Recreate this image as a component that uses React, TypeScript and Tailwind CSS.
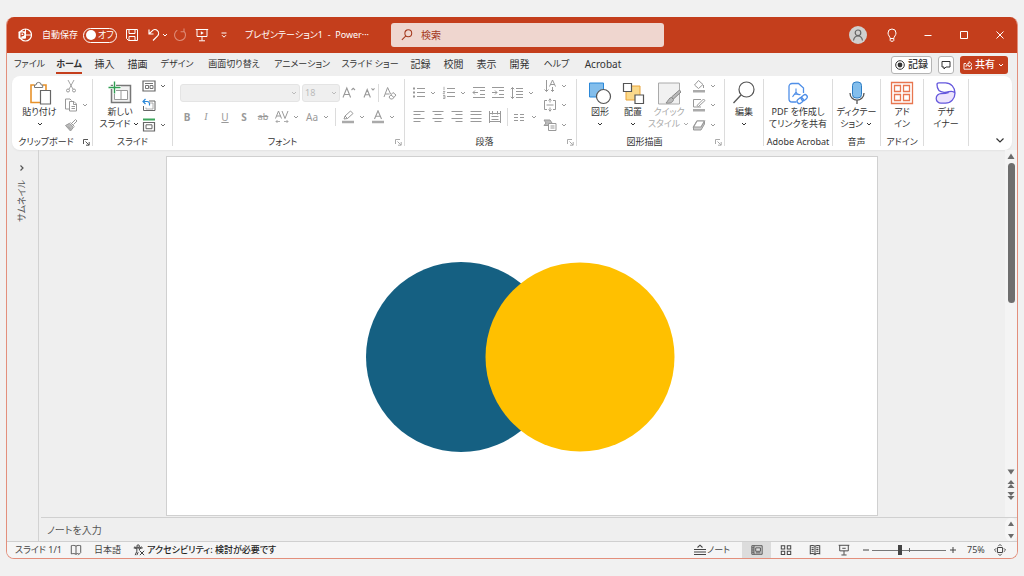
import type { ReactNode } from 'react';

type IconProps = { children: ReactNode; className?: string; box?: string };

function Icon({ children, className = 'size-3.5', box = '0 0 14 14' }: IconProps) {
  return (
    <svg className={`shrink-0 ${className}`} viewBox={box} fill="none" stroke="currentColor" aria-hidden="true">
      {children}
    </svg>
  );
}

function Caret({ className = 'size-2' }: { className?: string }) {
  return (
    <Icon className={className} box="0 0 8 8">
      <path d="M2 3l2 2 2-2" strokeWidth="1" />
    </Icon>
  );
}

// Small ribbon command, optionally with a drop-down arrow
function Tool({ label, caret, children }: { label: string; caret?: boolean; children: ReactNode }) {
  return (
    <button type="button" aria-label={label} className="flex items-center gap-[3px]">
      <span className="flex w-3.5 justify-center whitespace-nowrap">{children}</span>
      {caret && <Caret />}
    </button>
  );
}

// Large ribbon command: icon over one or two lines of text
function BigButton({ icon, lines, caret, className = '' }: { icon: ReactNode; lines: string[]; caret?: 'below' | 'inline'; className?: string }) {
  return (
    <button type="button" className={`flex flex-col items-center pt-1 text-[9px] leading-3 whitespace-nowrap ${className}`}>
      <span className="flex h-[26px] items-center justify-center">{icon}</span>
      {lines.map((line, i) => (
        <span key={line} className="flex items-center gap-0.5">
          {line}
          {caret === 'inline' && i === lines.length - 1 && <Caret />}
        </span>
      ))}
      {caret === 'below' && <Caret className="mt-0.5 size-2" />}
    </button>
  );
}

function Group({ label, className, launcher, muted, children }: { label?: string; className: string; launcher?: boolean; muted?: boolean; children: ReactNode }) {
  return (
    <section className={`flex shrink-0 ${className}`}>
      <div className="flex min-w-0 flex-1 flex-col">
        <div className="flex h-[59px] justify-center">{children}</div>
        <div className="flex h-3.5 items-center text-[9px] leading-3 whitespace-nowrap">
          <span className="flex flex-1 justify-center">{label}</span>
          {launcher && (
            <button type="button" aria-label={`${label}の詳細`} className={`flex w-3 justify-center ${muted ? 'text-[#aaa]' : 'text-[#555]'}`}>
              <Icon className="size-[7px]" box="0 0 7 7">
                <path d="M.5 5V.5H5M2.5 2.5l3.5 3.5M6.2 3v3.2H3" strokeWidth="1" />
              </Icon>
            </button>
          )}
        </div>
      </div>
      <div className="mt-[3px] mb-1 w-px bg-[#dcdcdc]" />
    </section>
  );
}

const tabs = [
  { name: 'ファイル', style: 'w-[41px] text-[9px]' },
  { name: 'ホーム', style: 'w-[38px] text-[9px]', active: true },
  { name: '挿入', style: 'w-[33px] text-[10px]' },
  { name: '描画', style: 'w-[33px] text-[10px]' },
  { name: 'デザイン', style: 'w-[46px] text-[9px]' },
  { name: '画面切り替え', style: 'w-[68px] text-[9px]' },
  { name: 'アニメーション', style: 'w-[68px] text-[9px]' },
  { name: 'スライド ショー', style: 'w-[68px] text-[9px]' },
  { name: '記録', style: 'w-[33px] text-[10px]' },
  { name: '校閲', style: 'w-[33px] text-[10px]' },
  { name: '表示', style: 'w-[33px] text-[10px]' },
  { name: '開発', style: 'w-[33px] text-[10px]' },
  { name: 'ヘルプ', style: 'w-[41px] text-[9px]' },
  { name: 'Acrobat', style: 'w-[52px] text-[10px]' },
];

function TitleBar() {
  return (
    <header className="flex h-9 items-center bg-[#c43e1c] text-[9px] text-white">
      <div className="flex min-w-0 flex-1 items-center pl-[11px]">
        <Icon>
          <circle cx="7.500" cy="7" r="6" strokeWidth="1.200" />
          <path d="M7.500 1v6h6" strokeWidth="1" />
          <rect x="0.500" y="3.200" width="7.500" height="7.600" rx="1" fill="#fff" stroke="none" />
          <path d="M3 9.500V5h1.600a1.300 1.300 0 010 2.600H3" stroke="#c43e1c" strokeWidth="1.100" />
        </Icon>
        <label htmlFor="autosave" className="ml-2.5 w-[41px] whitespace-nowrap">自動保存</label>
        <span className="relative flex h-[15px] w-[34px] items-center gap-0.5 rounded-full border border-white pl-0.5 whitespace-nowrap">
          <input id="autosave" type="checkbox" className="absolute inset-0 appearance-none rounded-full" />
          <span className="size-2.5 shrink-0 rounded-full bg-white" />
          <span>オフ</span>
        </span>
        <button type="button" aria-label="保存" className="ml-2">
          <Icon>
            <path d="M1.500 1.500h11v11h-9l-2-2zM4 1.500v4h6v-4M4 12.500v-4h6v4" />
          </Icon>
        </button>
        <button type="button" aria-label="元に戻す" className="ml-2 flex items-center">
          <Icon>
            <path d="M2 1.500v4.500h4.500M2.200 5.800l3-3a3.600 3.600 0 015.400 5L6 12.500" strokeWidth="1.200" />
          </Icon>
          <Caret />
        </button>
        <button type="button" aria-label="やり直し" className="ml-1 text-[#dd8b77]">
          <Icon>
            <path d="M4.300 2.200a5.500 5.500 0 106.600.9M11 .5v3.300H7.600" strokeWidth="1.100" />
          </Icon>
        </button>
        <button type="button" aria-label="スライドショーの開始" className="ml-2">
          <Icon>
            <path d="M.8 1.500h12.400M2 1.500v7h10v-7M7 8.500v4M4 12.800h6" />
            <path d="M5.800 3.200v3.600l3-1.800z" fill="currentColor" stroke="none" />
          </Icon>
        </button>
        <button type="button" aria-label="クイック アクセスのカスタマイズ" className="ml-2.5">
          <Icon className="size-2.5" box="0 0 10 10">
            <path d="M2.500 3h5M3 5.200l2 2 2-2" />
          </Icon>
        </button>
        <h1 className="ml-4 whitespace-nowrap">プレゼンテーション1 &nbsp;-&nbsp; Power···</h1>
      </div>
      <div className="flex h-6 w-[273px] shrink-0 items-center gap-2 rounded-[3px] bg-[#efd6cf] px-2.5 text-[#a4391e]">
        <Icon className="size-3">
          <circle cx="8.500" cy="5" r="4" strokeWidth="1.200" />
          <path d="M5.700 7.900L1 12.800" strokeWidth="1.200" />
        </Icon>
        <input type="search" aria-label="検索" placeholder="検索" className="min-w-0 flex-1 bg-transparent text-[10px] outline-none placeholder:text-[#a4391e] placeholder:opacity-100" />
      </div>
      <div className="flex w-[353px] shrink-0 items-center justify-end pr-2.5">
        <button type="button" aria-label="アカウント" className="mr-[18px] rounded-full bg-[#d0cfce] text-[#666]">
          <Icon className="size-[18px]" box="0 0 18 18">
            <circle cx="9" cy="6.800" r="2.800" strokeWidth="1.200" />
            <path d="M4.500 14.500c.5-3 2-4.500 4.500-4.500s4 1.500 4.500 4.500" strokeWidth="1.200" />
          </Icon>
        </button>
        <button type="button" aria-label="ヒント" className="mr-[22px]">
          <Icon>
            <path d="M5.200 10.500c0-1.800-2.200-3-2.200-5.500a4 4 0 018 0c0 2.500-2.200 3.700-2.200 5.500zM5.200 10.500v2l.6.700h2.400l.6-.7v-2" />
          </Icon>
        </button>
        <button type="button" aria-label="最小化" className="mr-[22px]">
          <Icon><path d="M3.500 7.500h7" /></Icon>
        </button>
        <button type="button" aria-label="最大化" className="mr-[22px]">
          <Icon><path d="M3.500 3.500h7v7h-7z" /></Icon>
        </button>
        <button type="button" aria-label="閉じる">
          <Icon><path d="M3.500 3.500l7 7M10.500 3.500l-7 7" /></Icon>
        </button>
      </div>
    </header>
  );
}

function TabRow() {
  return (
    <div className="flex h-[23px] items-center justify-between">
      <nav className="flex pl-0.5" role="tablist">
        {tabs.map((tab) => (
          <button
            key={tab.name}
            type="button"
            role="tab"
            aria-selected={!!tab.active}
            className={`flex justify-center leading-4 whitespace-nowrap ${tab.style}`}
          >
            <span className={tab.active ? 'border-b-2 border-[#c43e1c] font-bold' : 'border-b-2 border-transparent'}>{tab.name}</span>
          </button>
        ))}
      </nav>
      <div className="flex items-center gap-1.5 pr-[9px] text-[10px]">
        <button type="button" className="flex h-[18px] items-center gap-[3px] rounded-[3px] border border-[#b5b5b5] bg-white px-[3px] font-medium">
          <Icon className="size-2.5" box="0 0 10 10">
            <circle cx="5" cy="5" r="4.300" />
            <circle cx="5" cy="5" r="2.400" fill="currentColor" stroke="none" />
          </Icon>
          記録
        </button>
        <button type="button" aria-label="コメント" className="flex h-[18px] w-4 items-center justify-center rounded-[3px] border border-[#b5b5b5] bg-white">
          <Icon className="size-2.5" box="0 0 10 10">
            <path d="M1 1.500h8v5.500H5L3 9V7H1z" />
          </Icon>
        </button>
        <button type="button" className="flex h-[18px] items-center gap-0.5 rounded-[3px] bg-[#c43e1c] px-[3px] font-medium text-white">
          <Icon className="size-2.5" box="0 0 10 10">
            <path d="M3 3.500H1v5.700h7.500V6.500M3 6.500c.2-2 1.300-3 3-3V1.500l3 2.800-3 2.700V5.200c-1.400 0-2.200.3-3 1.300z" strokeWidth=".9" />
          </Icon>
          共有
          <Caret />
        </button>
      </div>
    </div>
  );
}

function ClipboardGroup() {
  return (
    <Group label="クリップボード" className="w-[81px]" launcher>
      <BigButton
        className="w-12"
        caret="below"
        lines={['貼り付け']}
        icon={
          <Icon className="size-6" box="0 0 24 24">
            <path d="M6.500 4H3v17.500h9M14.500 4h3.500v5" stroke="#e8922a" strokeWidth="1.600" />
            <path d="M6.500 6.500V4H8a2.600 2.600 0 015.200 0h1.500v2.500z" stroke="#777" fill="#fff" />
            <path d="M12.500 9.500h10v13.500h-10z" stroke="#666" fill="#fff" strokeWidth="1.200" />
          </Icon>
        }
      />
      <div className="grid grid-rows-3 items-center text-[#999]">
        <Tool label="切り取り">
          <Icon>
            <path d="M4 1l5 9.200M10 1L5 10.200" strokeWidth=".9" />
            <circle cx="4" cy="11.500" r="1.500" />
            <circle cx="10" cy="11.500" r="1.500" />
          </Icon>
        </Tool>
        <Tool label="コピー" caret>
          <Icon>
            <path d="M5 11H1.500V1H6l1.500 1.500M5.500 3.500h4.500l2.500 2.500v7h-7zM9.500 3.500v3h3M7.500 8.500h3.500M7.500 10.500h3.500" />
          </Icon>
        </Tool>
        <Tool label="書式のコピー">
          <Icon>
            <path d="M1.500 7.500l4-2.200 4 4-3 3.700zM4 8.500l3 3" fill="#bbb" />
            <path d="M6.500 4.500l4 4M8 5l3.500-3.500 1.500 1.500L9.500 6.500" />
          </Icon>
        </Tool>
      </div>
    </Group>
  );
}

function SlideGroup() {
  return (
    <Group label="スライド" className="w-20">
      <BigButton
        className="w-11"
        caret="inline"
        lines={['新しい', 'スライド']}
        icon={
          <Icon className="size-6" box="0 0 24 24">
            <path d="M3.500 4.500h19v17h-19z" fill="#f1f1f1" stroke="#777" strokeWidth="1.500" />
            <path d="M6.500 9.500h13v9h-13zM13 9.500v9" stroke="#999" fill="#fff" />
            <path d="M6.500 0v13M0 6.500h13" stroke="#fff" strokeWidth="3" />
            <path d="M6.500 .5v12M.5 6.500h12" stroke="#2f9e52" strokeWidth="1.400" />
          </Icon>
        }
      />
      <div className="grid grid-rows-3 items-center text-[#666]">
        <Tool label="レイアウト" caret>
          <Icon>
            <path d="M1 2h12v10H1z" strokeWidth="1.200" />
            <path d="M3 4.500h8M3.500 6.500h3v3h-3zM8 6.500h3v3H8z" strokeWidth=".9" />
          </Icon>
        </Tool>
        <Tool label="リセット">
          <Icon>
            <path d="M7 3h6v9.500H1.500V8" />
            <path d="M4 9.500v1.500h7V5H8" stroke="#999" strokeWidth=".8" />
            <path d="M3.500 1L1 3.500 3.500 6M1 3.500h4c2 0 2.800 1.400 2.500 4" stroke="#2b88d8" strokeWidth="1.200" />
          </Icon>
        </Tool>
        <Tool label="セクション" caret>
          <Icon>
            <path d="M1 1.500h12" stroke="#3ca55c" strokeWidth="2" />
            <path d="M1.500 4.500h11V13h-11z" strokeWidth="1.200" />
            <path d="M4 6.800h6v3.900H4z" strokeWidth="1" />
          </Icon>
        </Tool>
      </div>
    </Group>
  );
}

function FontGroup() {
  return (
    <Group label="フォント" className="w-[232px]" launcher muted>
      <div className="flex flex-1 flex-col pt-[5px] pl-[7px] text-[#999]">
        <div className="flex h-6 items-center gap-0.5">
          <label className="relative flex items-center text-[#bbb]">
            <select aria-label="フォント名" disabled className="h-[18px] w-[120px] appearance-none rounded-[3px] border border-[#e4e4e4] bg-[#efefef]">
              <option></option>
            </select>
            <Caret className="absolute right-0.5 size-2" />
          </label>
          <label className="relative flex items-center text-[#bbb]">
            <select aria-label="フォント サイズ" disabled className="h-[18px] w-[38px] appearance-none rounded-[3px] border border-[#e4e4e4] bg-[#efefef] pl-0.5 text-[9px] opacity-100">
              <option>18</option>
            </select>
            <Caret className="absolute right-0.5 size-2" />
          </label>
          <button type="button" aria-label="拡大">
            <Icon>
              <path d="M1 11.500L4.800 2 8.600 11.500M2.300 8.500h5M9.500 4l1.700-1.700L13 4" strokeWidth="1.100" />
            </Icon>
          </button>
          <button type="button" aria-label="縮小" className="ml-1">
            <Icon>
              <path d="M2 11.500L5.200 3.500 8.400 11.500M3 8.800h4.400M9.500 2.300L11 4l1.500-1.700" strokeWidth="1.100" />
            </Icon>
          </button>
          <span className="h-[18px] w-px bg-[#dcdcdc]" />
          <button type="button" aria-label="書式のクリア" className="ml-0.5">
            <Icon>
              <path d="M1 11L4.600 1.500l3 6.500M2.300 8h4.200M6 11l4-4.500 3 2.500-3.500 4H7.500zM8 9l3 2.500" />
            </Icon>
          </button>
        </div>
        <div className="flex h-6 items-center gap-[5px] text-[10px] leading-4">
          <Tool label="太字"><b>B</b></Tool>
          <Tool label="斜体"><i className="font-['Liberation_Serif']">I</i></Tool>
          <Tool label="下線"><u>U</u></Tool>
          <Tool label="影"><b>S</b></Tool>
          <Tool label="取り消し線"><s className="text-[9px]">ab</s></Tool>
          <Tool label="文字の間隔" caret>
            <Icon>
              <path d="M0.500 8.500l3-7.500 3 7.500M1.500 6h4M7 1l3 7.500L13 1" />
              <path d="M1 11.500h4M9 11.500h4M2.500 10L1 11.500 2.500 13M11.500 10l1.500 1.500-1.500 1.500" strokeWidth=".8" />
            </Icon>
          </Tool>
          <Tool label="文字種の変換" caret>Aa</Tool>
          <span className="h-[18px] w-px bg-[#dcdcdc]" />
          <Tool label="蛍光ペン" caret>
            <Icon>
              <path d="M3 9l1-3 5.500-5 2.500 2.500-5.500 5zM4 6l2.500 2.500" />
              <path d="M1 12h12" strokeWidth="2.500" stroke="#aaa" />
            </Icon>
          </Tool>
          <Tool label="フォントの色" caret>
            <Icon>
              <path d="M3.500 9L7 .8 10.500 9M4.700 6.300h4.600" strokeWidth="1.100" />
              <path d="M1 12h12" strokeWidth="2.500" stroke="#aaa" />
            </Icon>
          </Tool>
        </div>
      </div>
    </Group>
  );
}

function ParagraphGroup() {
  return (
    <Group label="段落" className="w-[172px]" launcher muted>
      <div className="flex flex-1 pl-[7px] text-[#999]">
        <div className="flex w-[131px] flex-col pt-[5px]">
          <div className="flex h-6 items-center gap-[5px]">
            <Tool label="箇条書き" caret>
              <Icon>
                <path d="M5 2.500h8M5 6.500h8M5 10.500h8" />
                <path d="M1 2.500h2M1 6.500h2M1 10.500h2" strokeWidth="2" />
              </Icon>
            </Tool>
            <Tool label="段落番号" caret>
              <Icon>
                <path d="M5 2.500h8M5 6.500h8M5 10.500h8" />
                <path d="M2 .8v3.400M1 5.500h2L1 7.700h2M1 9.500h2v3H1M1 11h2" strokeWidth=".8" />
              </Icon>
            </Tool>
            <Tool label="インデントを減らす">
              <Icon>
                <path d="M1 1.500h12M8 4.500h5M8 8.500h5M1 11.500h12M6 6.500H1M3 4.500l-2 2 2 2" />
              </Icon>
            </Tool>
            <Tool label="インデントを増やす">
              <Icon>
                <path d="M1 1.500h12M8 4.500h5M8 8.500h5M1 11.500h12M1 6.500h5M4 4.500l2 2-2 2" />
              </Icon>
            </Tool>
            <Tool label="行間" caret>
              <Icon>
                <path d="M6 2.500h7M6 5.500h7M6 8.500h7M6 11.500h7M2.500 1.500v11M.8 3.200l1.700-1.700 1.700 1.700M.8 10.800l1.700 1.700 1.700-1.700" />
              </Icon>
            </Tool>
          </div>
          <div className="flex h-6 items-center gap-[5px]">
            <Tool label="左揃え"><Icon><path d="M1.500 1.500h11M1.500 4.500h7M1.500 8.500h11M1.500 11.500h7" /></Icon></Tool>
            <Tool label="中央揃え"><Icon><path d="M1.500 1.500h11M3.500 4.500h7M1.500 8.500h11M3.500 11.500h7" /></Icon></Tool>
            <Tool label="右揃え"><Icon><path d="M1.500 1.500h11M5.500 4.500h7M1.500 8.500h11M5.500 11.500h7" /></Icon></Tool>
            <Tool label="両端揃え"><Icon><path d="M1.500 1.500h11M1.500 4.500h11M1.500 8.500h11M1.500 11.500h11" /></Icon></Tool>
            <Tool label="均等割り付け"><Icon><path d="M1.500 1v12M12.500 1v12M1.500 3.500h11M4.500 1v3.500M9.500 1v3.500M3.500 6.500h7M3.500 9.500h7M1.500 11.500h11" /></Icon></Tool>
            <span className="h-[18px] w-px bg-[#dcdcdc]" />
            <Tool label="段組み" caret><Icon><path d="M1 4.500h4M1 7.500h4M1 10.500h4M7 4.500h4M7 7.500h4M7 10.500h4" /></Icon></Tool>
          </div>
        </div>
        <div className="grid grid-rows-3 items-center">
          <Tool label="文字列の方向" caret>
            <Icon>
              <path d="M3.500 1v11.500M1.500 10.500l2 2 2-2M9.500 8v4.500M8 11l1.500 1.500L11 11M6.500 7.500l3-6.500 3 6.500M7.500 5.500h4" />
            </Icon>
          </Tool>
          <Tool label="文字の配置" caret>
            <Icon>
              <path d="M4 2.500H1.500v9H4M10 2.500h2.500v9H10M7 .5v4M5.500 2.500L7 1l1.500 1.500M7 9.500v4M5.500 11.500L7 13l1.500-1.500M3.500 7h7" />
            </Icon>
          </Tool>
          <Tool label="SmartArt に変換" caret>
            <Icon>
              <path d="M1 2h6l2 3-2 2.500H1L3 5z" fill="#bbb" />
              <path d="M5.500 5.500h7.500v7H5.500zM7.500 8h4M7.500 10h4" fill="#fff" />
            </Icon>
          </Tool>
        </div>
      </div>
    </Group>
  );
}

function DrawingGroup() {
  return (
    <Group label="図形描画" className="w-[148px]" launcher muted>
      <BigButton
        className="w-8"
        caret="below"
        lines={['図形']}
        icon={
          <Icon className="size-6" box="0 0 24 24">
            <path d="M1.500 2h14v14h-14z" fill="#83beec" stroke="#2b88d8" />
            <circle cx="15.500" cy="15.500" r="7" fill="#fff" stroke="#555" strokeWidth="1.200" />
          </Icon>
        }
      />
      <BigButton
        className="w-[34px]"
        caret="below"
        lines={['配置']}
        icon={
          <Icon className="size-6" box="0 0 24 24">
            <path d="M5 5h14v14H5z" fill="#fbd98a" stroke="#e8a33a" />
            <path d="M2.500 2.500h8v8h-8zM14 14h8.500v8.500H14z" fill="#fff" stroke="#555" strokeWidth="1.200" />
          </Icon>
        }
      />
      <BigButton
        className="w-[38px] text-[#aaa]"
        caret="inline"
        lines={['クイック', 'スタイル']}
        icon={
          <Icon className="size-6" box="0 0 24 24">
            <path d="M1.500 2h21v21h-21z" fill="#f1f1f1" stroke="#aaa" />
            <path d="M22.500 9l-8 7 2 2L24 11zM14.500 16.500c-2.500 0-3 3-5.500 5.500 3 .5 7 0 7.500-3.500z" fill="#bbb" stroke="#888" />
          </Icon>
        }
      />
      <div className="ml-1 grid grid-rows-3 items-center text-[#999]">
        <Tool label="図形の塗りつぶし" caret>
          <Icon>
            <path d="M6.500 1.500l4.500 4-4.500 4L2.500 6zM11.500 6v3" />
            <path d="M1 12.200h12" strokeWidth="2.400" stroke="#aaa" />
          </Icon>
        </Tool>
        <Tool label="図形の枠線" caret>
          <Icon>
            <path d="M9 1.500H1.500V9H9M5 7.500L11.500 1 13 2.500 6.500 8.500z" />
            <path d="M1 12.200h12" strokeWidth="2.400" stroke="#aaa" />
          </Icon>
        </Tool>
        <Tool label="図形の効果" caret>
          <Icon>
            <path d="M1.500 9L5 3h7.500v3L9 12H1.500z" fill="#ccc" />
            <path d="M5 3h7.500L9 9H1.500z" fill="#fff" strokeWidth="1.200" />
          </Icon>
        </Tool>
      </div>
    </Group>
  );
}

function Ribbon() {
  return (
    <div className="mx-[5px] flex h-[74px] rounded-lg bg-white shadow-xs">
      <ClipboardGroup />
      <SlideGroup />
      <FontGroup />
      <ParagraphGroup />
      <DrawingGroup />
      <Group className="w-[39px]">
        <BigButton
          caret="below"
          lines={['編集']}
          icon={
            <Icon className="size-6" box="0 0 24 24">
              <circle cx="14.500" cy="8.500" r="7.500" stroke="#555" strokeWidth="1.200" />
              <path d="M9 14l-7.500 8" stroke="#555" strokeWidth="1.300" />
            </Icon>
          }
        />
      </Group>
      <Group label="Adobe Acrobat" className="w-[69px]">
        <BigButton
          lines={['PDF を作成し', 'てリンクを共有']}
          icon={
            <Icon className="size-6" box="0 0 24 24">
              <path d="M10.500 21H6a3 3 0 01-3-3V5.500a3 3 0 013-3h6.500l5 4.500v5" stroke="#4f8fe8" strokeWidth="1.300" />
              <path d="M10 7.500v3.500L6.500 16M10 11c1 2.500 2.500 3 4.500 2.500M7 14.500c2.500-1.800 4.500-1.600 6-1.200" stroke="#4f8fe8" strokeWidth="1.100" />
              <rect x="11" y="17.500" width="6.500" height="4.500" rx="2.200" transform="rotate(-40 14 19.750)" stroke="#4f8fe8" strokeWidth="1.300" />
              <rect x="15" y="14.500" width="6.500" height="4.500" rx="2.200" transform="rotate(-40 18 16.750)" stroke="#4f8fe8" strokeWidth="1.300" />
            </Icon>
          }
        />
      </Group>
      <Group label="音声" className="w-12">
        <BigButton
          caret="inline"
          lines={['ディクテー', 'ション']}
          icon={
            <Icon className="size-6" box="0 0 24 24">
              <rect x="7.500" y="1" width="9" height="16" rx="3.500" fill="#83beec" stroke="#2b7cc4" />
              <path d="M5 12c0 9.500 14 9.500 14 0M12 19v4" stroke="#555" strokeWidth="1.300" />
            </Icon>
          }
        />
      </Group>
      <Group label="アドイン" className="w-[43px]">
        <BigButton
          lines={['アド', 'イン']}
          icon={
            <Icon className="size-6" box="0 0 24 24">
              <path d="M1.500 1.500h21v21h-21zM4.500 4.500h6v6h-6zM13.500 4.500h6v6h-6zM4.500 13.500h6v6h-6zM13.500 13.500h6v6h-6z" stroke="#e8764f" strokeWidth="1.300" />
            </Icon>
          }
        />
      </Group>
      <Group className="w-[45px]">
        <BigButton
          lines={['デザ', 'イナー']}
          icon={
            <Icon className="size-6" box="0 0 24 24">
              <path d="M3 3.500C3 2 4 1.800 5 1.800h6.500C17 1.800 21 6.500 21 12s-4 10.200-9.500 10.200H7a4.800 4.800 0 010-9.600c4.500 0 7-.8 9-2.800" fill="#ece4fc" stroke="none" />
              <path d="M3 3.500C3 2 4 1.800 5 1.800h6.500C17 1.800 21 6.500 21 12c-1-2-4-2.500-6-.8-2-.2-4-.2-6 0C5 10 3 7 3 3.500z" fill="#fff" stroke="none" />
              <path d="M15 11.300c-3 1.300-5 1.300-8 1.300a4.800 4.800 0 000 9.600h4.500C17 22.200 21 17.500 21 12S17 1.800 11.500 1.800H5c-1.500 0-2 .7-2 1.700 0 4.500 2.500 7.500 7 7.800 5 .3 8-3 11 .7" stroke="#6558dd" strokeWidth="1.300" />
            </Icon>
          }
        />
      </Group>
      <div className="flex flex-1 items-end justify-end pr-1.5 pb-1">
        <button type="button" aria-label="リボンを折りたたむ">
          <Icon className="size-3" box="0 0 12 12">
            <path d="M2.500 4.500L6 8l3.500-3.500" strokeWidth="1.200" />
          </Icon>
        </button>
      </div>
    </div>
  );
}

function Workspace() {
  return (
    <main className="flex min-h-0 flex-1">
      <aside className="flex w-8 flex-col items-center gap-2 border-r border-[#d2d2d2] pr-0.5 pt-3.5 text-[9px] leading-3 text-[#555]">
        <button type="button" aria-label="サムネイルを開く">
          <Icon className="size-2" box="0 0 8 8">
            <path d="M2.500 1.500L5 4 2.500 6.500" strokeWidth="1.200" />
          </Icon>
        </button>
        <span className="rotate-180 [text-orientation:sideways] [writing-mode:vertical-rl]">サムネイル</span>
      </aside>
      <div className="flex min-w-0 flex-1 flex-col">
        <div className="flex min-h-0 flex-1">
          <div className="flex min-w-0 flex-1 justify-center pt-1.5 pb-px">
            <svg className="h-full border border-[#d0d0d0] bg-white" viewBox="0 0 710 358" role="img" aria-label="スライド 1">
              <circle cx="294" cy="200" r="95" fill="#156082" />
              <circle cx="413" cy="200" r="94.500" fill="#ffc000" />
            </svg>
          </div>
          <div className="flex w-3 flex-col items-center bg-[#f4f4f4] pt-0.5 text-[#6b6b6b]">
            <Icon className="size-2" box="0 0 8 8"><path d="M4 1.500L7.500 7h-7z" fill="currentColor" stroke="none" /></Icon>
            <span className="mt-[3px] h-[140px] w-[7px] rounded-full bg-[#6e6e6e]" />
            <div className="mt-auto flex flex-col gap-1 pb-[17px]">
              <Icon className="size-2" box="0 0 8 8"><path d="M.5 1.500h7L4 6.500z" fill="currentColor" stroke="none" /></Icon>
              <Icon className="size-2" box="0 0 8 8"><path d="M4 0l3.500 4h-7zM4 4l3.500 4h-7z" fill="currentColor" stroke="none" /></Icon>
              <Icon className="size-2" box="0 0 8 8"><path d="M.5 0h7L4 4zM.5 4h7L4 8z" fill="currentColor" stroke="none" /></Icon>
            </div>
          </div>
        </div>
        <div className="ml-0.5 flex h-6 items-center border-t border-[#d0d0d0]">
          <textarea
            aria-label="ノート"
            rows={1}
            placeholder="ノートを入力"
            className="h-4 flex-1 resize-none overflow-hidden bg-transparent pl-1.5 text-[10px] leading-4 outline-none placeholder:text-[#555] placeholder:opacity-100"
          />
          <div className="flex h-full w-3 flex-col items-center justify-center gap-1 rounded-md bg-[#f6f6f6] text-[#6b6b6b]">
            <Icon className="size-2" box="0 0 8 8"><path d="M4 1.500L7 6H1z" fill="currentColor" stroke="none" /></Icon>
            <Icon className="size-2" box="0 0 8 8"><path d="M1 2h6L4 6.500z" fill="currentColor" stroke="none" /></Icon>
          </div>
        </div>
      </div>
    </main>
  );
}

function StatusBar() {
  return (
    <footer className="flex h-[17px] items-center justify-between border-t border-[#d0d0d0] bg-[#f5f5f5] text-[9px] leading-3 whitespace-nowrap text-[#444]">
      <div className="flex items-center pl-2">
        <span className="w-[55px]">スライド 1/1</span>
        <button type="button" aria-label="スペルチェック" className="mr-3">
          <Icon className="size-3">
            <path d="M7 2.500C5.500 1.500 3.500 1.500 1.500 2v9.500c2-.5 4-.5 5.500.5 1-.7 2-1 3-1M7 2.500C8.500 1.500 10.500 1.500 12.500 2v8L9.500 13M7 2.500V12" />
          </Icon>
        </button>
        <button type="button" className="mr-3">日本語</button>
        <button type="button" className="flex items-center gap-0.5 font-medium text-[#222]">
          <Icon className="size-3">
            <circle cx="6" cy="2.500" r="1.500" />
            <path d="M1 4.500l3.500 1v3L2.500 13M11 4.500l-3.500 1v2M1 4.500l1-1 4 1.500 4-1.500 1 1M4.500 13L6 9.500M8 8l5 5M13 8l-5 5" />
          </Icon>
          アクセシビリティ: 検討が必要です
        </button>
      </div>
      <div className="flex h-full items-center pr-[11px]">
        <button type="button" className="mr-3 flex items-center">
          <Icon className="h-3 w-3.5" box="0 0 14 12">
            <path d="M1 5.500h12M1 8h12M1 10.500h12M4.500 3.500L7 1.200l2.500 2.300" strokeWidth="1.100" />
          </Icon>
          ノート
        </button>
        <button type="button" aria-label="標準" className="flex h-full w-[29px] items-center justify-center bg-[#dcdcdc]">
          <Icon className="size-3">
            <path d="M1 2h12v10H1zM3.500 2v10M1 9.500h2.500M5.500 4.500h5.500v4H5.500zM1 4.500h2.500M1 7h2.500M5.500 10.300h5.500" />
          </Icon>
        </button>
        <button type="button" aria-label="スライド一覧" className="flex w-[29px] justify-center">
          <Icon className="size-3">
            <path d="M1.500 2h4v3.800h-4zM8.500 2h4v3.800h-4zM1.500 8.500h4v3.800h-4zM8.500 8.500h4v3.800h-4z" strokeWidth="1.200" />
          </Icon>
        </button>
        <button type="button" aria-label="閲覧表示" className="flex w-[29px] justify-center">
          <Icon className="size-3">
            <path d="M7 2.500C5.500 1.500 3.500 1.500 1.500 2v9.500c2-.5 4-.5 5.500.8 1.500-1.300 3.500-1.300 5.500-.8V2c-2-.5-4-.5-5.500.5v9.800M3 4.500h2.500M3 6.500h2.500M3 8.500h2.500M8.500 4.500H11M8.500 6.500H11M8.500 8.500H11" strokeWidth="1.200" />
          </Icon>
        </button>
        <button type="button" aria-label="スライドショー" className="flex w-[29px] justify-center">
          <Icon className="size-3">
            <path d="M.8 1.500h12.400M2 1.500v6.500h10V1.500M7 8v4.500M4 12.800h6M5 5h4" strokeWidth="1.100" />
          </Icon>
        </button>
        <button type="button" aria-label="縮小表示" className="ml-1 w-2.5">
          <Icon className="size-2" box="0 0 8 8"><path d="M1 4h6" /></Icon>
        </button>
        <span className="relative flex w-[74px] items-center">
          <span className="absolute left-1/2 h-1 w-px bg-[#666]" />
          <input
            type="range"
            aria-label="ズーム"
            min={10}
            max={190}
            defaultValue={78}
            className="h-2.5 w-full appearance-none bg-transparent bg-[linear-gradient(#777,#777)] bg-[length:100%_1px] bg-center bg-no-repeat [&::-webkit-slider-thumb]:h-2.5 [&::-webkit-slider-thumb]:w-1 [&::-webkit-slider-thumb]:appearance-none [&::-webkit-slider-thumb]:bg-[#444]"
          />
        </span>
        <button type="button" aria-label="拡大表示" className="ml-[3px] w-2.5">
          <Icon className="size-2" box="0 0 8 8"><path d="M1 4h6M4 1v6" /></Icon>
        </button>
        <span className="ml-2 w-[27px]">75%</span>
        <button type="button" aria-label="ウィンドウに合わせる">
          <Icon className="size-3">
            <rect x="4" y="4" width="6" height="6" rx="1" strokeWidth="1.200" />
            <path d="M5 2.500l2-2 2 2M5 11.500l2 2 2-2M2.500 5l-2 2 2 2M11.500 5l2 2-2 2" strokeWidth="1.100" />
          </Icon>
        </button>
      </div>
    </footer>
  );
}

export default function App() {
  return (
    <div className="flex h-screen flex-col bg-[#f1f1f1] px-1.5 py-[17px] font-['Noto_Sans','Noto_Sans_CJK_JP',sans-serif] text-[#333] [font-feature-settings:'palt']">
      <div className="flex min-h-0 flex-1 flex-col overflow-hidden rounded-lg border border-t-0 border-[#e38f7c] bg-[#efefef]">
        <TitleBar />
        <TabRow />
        <Ribbon />
        <Workspace />
        <StatusBar />
      </div>
    </div>
  );
}
